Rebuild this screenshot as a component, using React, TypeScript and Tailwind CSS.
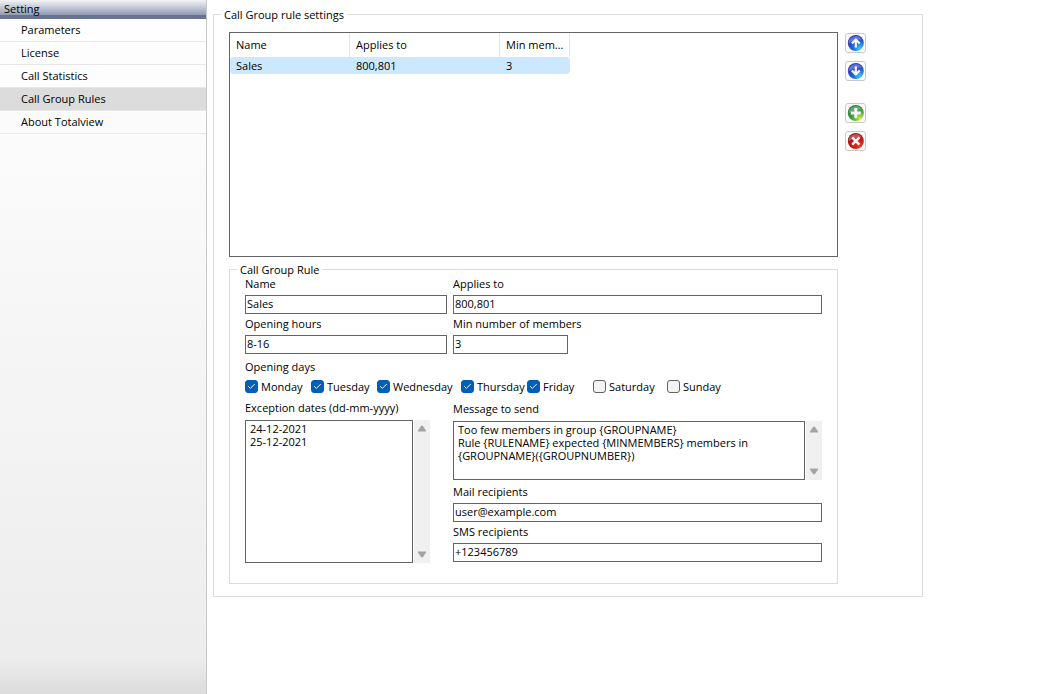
import { useState } from 'react';
import type { ReactNode } from 'react';
import { Check } from 'lucide-react';

const MENU = ['Parameters', 'License', 'Call Statistics', 'Call Group Rules', 'About Totalview'];

const DAYS = [
  { name: 'Monday', open: true },
  { name: 'Tuesday', open: true },
  { name: 'Wednesday', open: true },
  { name: 'Thursday', open: true },
  { name: 'Friday', open: true },
  { name: 'Saturday', open: false },
  { name: 'Sunday', open: false },
];

const MESSAGE = `Too few members in group {GROUPNAME}
Rule {RULENAME} expected {MINMEMBERS} members in {GROUPNAME}({GROUPNUMBER})`;

interface FieldProps {
  id: string;
  label: string;
  value: string;
  inputClass?: string;
}

function Field({ id, label, value, inputClass = 'w-full' }: FieldProps) {
  return (
    <div className="flex flex-col gap-[5px]">
      <label htmlFor={id} className="leading-[13px]">{label}</label>
      <input
        id={id}
        defaultValue={value}
        className={`h-[19px] border border-[#646464] bg-white px-px pb-0.5 outline-none ${inputClass}`}
      />
    </div>
  );
}

function ScrollTrack() {
  return (
    <div className="flex w-4 shrink-0 flex-col items-center justify-between bg-[#f0f0f0] py-[5px]" aria-hidden="true">
      <svg width="10" height="7" viewBox="0 0 10 7" fill="#a3a3a3">
        <path d="M4.2 0.8h1.6L9 5.6v1H1v-1z" />
      </svg>
      <svg width="10" height="7" viewBox="0 0 10 7" fill="#a3a3a3">
        <path d="M4.2 6.2h1.6L9 1.4v-1H1v1z" />
      </svg>
    </div>
  );
}

interface OrbButtonProps {
  label: string;
  id: string;
  colors: [string, string, string];
  children: ReactNode;
}

function OrbButton({ label, id, colors, children }: OrbButtonProps) {
  return (
    <button
      type="button"
      aria-label={label}
      className="grid h-5 w-[21px] place-items-center rounded-[3px] border border-[#c8c8c8] bg-[#fdfdfd]"
    >
      <svg width="17" height="16" viewBox="0 0 17 16">
        <defs>
          <radialGradient id={id} cx="0.75" cy="0.85" r="0.85">
            <stop offset="0" stopColor={colors[0]} />
            <stop offset="0.5" stopColor={colors[1]} />
            <stop offset="1" stopColor={colors[2]} />
          </radialGradient>
        </defs>
        <circle cx="8.8" cy="8" r="8" fill={`url(#${id})`} />
        <path d="M1.6 8.4a7 7 0 0 1 13-3.8C11 4 6 5 1.6 8.4z" fill="#fff" opacity="0.28" />
        <g stroke="#f4f6fa" fill="none" strokeLinejoin="round">
          {children}
        </g>
      </svg>
    </button>
  );
}

export default function App() {
  const [active, setActive] = useState('Call Group Rules');

  return (
    <div className="flex min-h-screen bg-white font-['Open_Sans','Noto_Sans',sans-serif] text-[11px] leading-[15px] text-black">
      <nav className="flex w-[207px] shrink-0 flex-col border-r border-[#c8c8c8] bg-linear-to-b from-white to-[#ececec]">
        <h1 className="h-[19px] border-b-4 border-[#68748f] bg-linear-to-b from-[#f4f5f8] to-[#929cb3] px-1 pt-px">
          Setting
        </h1>
        <ul className="flex-1">
          {MENU.map((item) => (
            <li key={item}>
              <button
                type="button"
                onClick={() => setActive(item)}
                className={`block h-[23px] w-full border-b border-[#e8e8e8] pb-0.5 pl-[21px] text-left ${item === active ? 'bg-[#dcdcdc]' : ''}`}
              >
                {item}
              </button>
            </li>
          ))}
        </ul>
        <div className="h-9 bg-linear-to-b from-transparent to-[#dcdcdc]" />
      </nav>

      <main className="min-w-0 flex-1 pt-[7px] pl-[6px]">
        <fieldset className="w-full max-w-[710px] border border-[#dcdcdc] pr-14 pb-3 pl-[15px]">
          <legend className="-ml-2 px-[3px]">Call Group rule settings</legend>
          <div className="flex gap-[7px] pt-[10px]">
            <div className="flex min-w-0 flex-1 flex-col gap-[5px]">
              <div className="h-[225px] border border-[#646464]">
                <table className="w-[340px] table-fixed border-separate border-spacing-0 text-left">
                  <thead>
                    <tr className="h-6">
                      <th className="w-[120px] border-r border-[#e5e5e5] p-0 pb-0.5 pl-[6px] font-normal">Name</th>
                      <th className="w-[150px] border-r border-[#e5e5e5] p-0 pb-0.5 pl-[6px] font-normal">Applies to</th>
                      <th className="truncate border-r border-[#e5e5e5] p-0 pr-1 pb-0.5 pl-[6px] font-normal">Min members</th>
                    </tr>
                  </thead>
                  <tbody>
                    <tr className="h-[17px]">
                      <td className="rounded-l-sm bg-[#cce8ff] p-0 pl-[6px]">Sales</td>
                      <td className="bg-[#cce8ff] p-0 pl-[6px]">800,801</td>
                      <td className="rounded-r-sm bg-[#cce8ff] p-0 pl-[6px]">3</td>
                    </tr>
                  </tbody>
                </table>
              </div>

              <fieldset className="min-w-0 border border-[#dcdcdc] px-[15px] pb-5">
                <legend className="-ml-2 px-[3px]">Call Group Rule</legend>
                <div className="grid grid-cols-[202px_minmax(0,1fr)] gap-x-[6px] gap-y-[3px]">
                  <Field id="name" label="Name" value="Sales" />
                  <Field id="applies" label="Applies to" value="800,801" />
                  <Field id="hours" label="Opening hours" value="8-16" />
                  <Field id="min" label="Min number of members" value="3" inputClass="w-[115px]" />
                </div>

                <div role="group" aria-labelledby="days" className="mt-[6px]">
                  <div id="days" className="leading-[13px]">Opening days</div>
                  <div className="mt-[7px] grid h-[13px] grid-cols-[66px_66px_84px_66px_66px_74px_auto] items-center">
                    {DAYS.map((day) => (
                      <label key={day.name} className="flex h-[13px] gap-[3px] leading-[13px]">
                        <span className="relative size-[13px] shrink-0">
                          <input
                            type="checkbox"
                            defaultChecked={day.open}
                            className="peer block size-[13px] appearance-none rounded-[3px] border border-[#626262] bg-[#f3f3f3] checked:border-[#005fb8] checked:bg-[#005fb8]"
                          />
                          <Check
                            size={9}
                            strokeWidth={2.5}
                            className="pointer-events-none absolute top-0.5 left-0.5 hidden text-white peer-checked:block"
                          />
                        </span>
                        {day.name}
                      </label>
                    ))}
                  </div>
                </div>

                <div className="mt-2 grid grid-cols-[202px_minmax(0,1fr)] gap-x-[6px]">
                  <div className="flex flex-col gap-[6px]">
                    <label htmlFor="exceptions" className="leading-[13px]">Exception dates (dd-mm-yyyy)</label>
                    <div className="flex gap-px">
                      <textarea
                        id="exceptions"
                        defaultValue={'24-12-2021\n25-12-2021'}
                        className="h-[143px] w-[168px] resize-none overflow-hidden border border-[#646464] px-1 py-px leading-[13px] outline-none"
                      />
                      <ScrollTrack />
                    </div>
                  </div>
                  <div className="flex flex-col gap-[3px] pt-px">
                    <div className="mb-0.5 flex flex-col gap-[6px]">
                      <label htmlFor="message" className="leading-[13px]">Message to send</label>
                      <div className="flex gap-px">
                        <textarea
                          id="message"
                          defaultValue={MESSAGE}
                          className="h-[59px] min-w-0 flex-1 resize-none overflow-hidden border border-[#646464] px-1 py-px leading-[13px] outline-none"
                        />
                        <ScrollTrack />
                      </div>
                    </div>
                    <Field id="mail" label="Mail recipients" value="user@example.com" />
                    <Field id="sms" label="SMS recipients" value="+123456789" />
                  </div>
                </div>
              </fieldset>
            </div>

            <div className="flex flex-col gap-2 pt-px">
              <OrbButton label="Move up" id="orb-up" colors={['#2fd0f5', '#2464d8', '#2a35b4']}>
                <path d="M8.8 12.4V5M4.9 8.6l3.9-4 3.9 4" strokeWidth="2.2" />
              </OrbButton>
              <OrbButton label="Move down" id="orb-down" colors={['#2fd0f5', '#2464d8', '#2a35b4']}>
                <path d="M8.8 3.6V11M4.9 7.4l3.9 4 3.9-4" strokeWidth="2.2" />
              </OrbButton>
              <div className="h-[6px]" />
              <OrbButton label="Add rule" id="orb-add" colors={['#c9f03c', '#4fa83a', '#257a34']}>
                <path d="M8.8 3v10M3.8 8h10" strokeWidth="3" />
              </OrbButton>
              <OrbButton label="Delete rule" id="orb-del" colors={['#e8391f', '#cc1a14', '#9c0f12']}>
                <path d="M5.2 4.4l7.2 7.2M12.4 4.4l-7.2 7.2" strokeWidth="2.6" />
              </OrbButton>
            </div>
          </div>
        </fieldset>
      </main>
    </div>
  );
}
